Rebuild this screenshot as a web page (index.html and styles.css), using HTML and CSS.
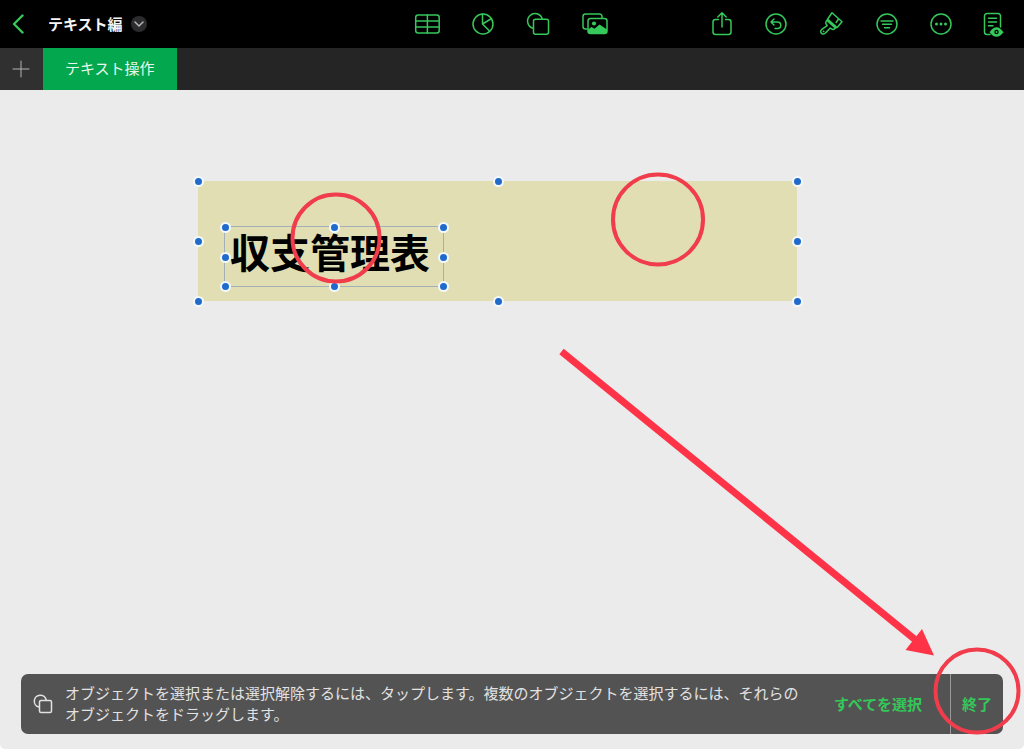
FILE: index.html
```html
<!DOCTYPE html>
<html lang="ja">
<head>
<meta charset="utf-8">
<title>テキスト編</title>
<link rel="stylesheet" href="styles.css">
</head>
<body>
<div class="app">
  <header class="toolbar">
    <div class="toolbar-start">
      <button class="back" aria-label="戻る"><svg width="12" height="20" viewBox="0 0 12 20"><path d="M10.500 1.500L2 10l8.500 8.500" stroke-width="2.400"/></svg></button>
      <h1 class="title">テキスト編</h1>
      <button class="title-menu" aria-label="書類メニュー"><svg width="10" height="6" viewBox="0 0 10 6"><path d="M1 1l4 4 4-4"/></svg></button>
    </div>
    <div class="tools tools-insert">
      <button class="tool" aria-label="表"><svg viewBox="0 0 28 28"><rect x="2.700" y="5" width="23.500" height="18" rx="2.500"/><path d="M14.400 5v18M2.700 11h23.500M2.700 17h23.500"/></svg></button>
      <button class="tool" aria-label="グラフ"><svg viewBox="0 0 28 28"><circle cx="14" cy="14" r="10"/><path d="M13.500 4v10l7 7M13.500 14l9-5.500"/></svg></button>
      <button class="tool" aria-label="図形"><svg viewBox="0 0 28 28"><path d="M8 18.300A7.500 7.500 0 1 1 17.300 9"/><rect x="8.500" y="9.200" width="15" height="15" rx="2"/></svg></button>
      <button class="tool" aria-label="メディア"><svg viewBox="0 0 28 28"><path d="M6 19H4.500A2.500 2.500 0 0 1 2 16.500V6.500A2.500 2.500 0 0 1 4.500 4H18.500A2.500 2.500 0 0 1 21 6.500V8"/><rect x="7" y="8.500" width="19" height="15" rx="2.500"/><circle class="fill" cx="13" cy="13.500" r="2.100"/><path class="fill" d="M7 19.500l3.500-2.500 3 1.800 5-4.300 7.500 5v1.500q0 2.500-2.500 2.500h-14Q7 23.500 7 21z"/></svg></button>
    </div>
    <div class="tools tools-actions">
      <button class="tool" aria-label="共有"><svg viewBox="0 0 28 28"><path d="M9.500 9.500H6.500A2.500 2.500 0 0 0 4 12v10A2.500 2.500 0 0 0 6.500 24.500h13a2.500 2.500 0 0 0 2.500-2.500V12a2.500 2.500 0 0 0-2.500-2.500H16.500M13 17V3M8.800 7L13 2.800 17.200 7"/></svg></button>
      <button class="tool" aria-label="取り消す"><svg viewBox="0 0 28 28"><circle cx="13" cy="14" r="10"/><path d="M11 9l-3 3 3 3M8 12h6.500a3.200 3.200 0 0 1 0 6.500H12"/></svg></button>
      <button class="tool" aria-label="フォーマット"><svg viewBox="0 0 28 28"><path d="M15 2.800L25 11.800l-4.200 5q-1.500 1.800-3.300.3l-6.500-5.700q-1.400-1.300 0-2.900zM10.800 9.200L19 16.600l-1.200 2q-1.500 1.500-3.300.3l-1.300-.9L9 22.600q-2.200 2.500-4.500.8-2-2.400.7-4.300l5-3.500-1-1.400q-1-1.400.1-3zM21.500 9l-2.300 3.500"/><circle class="fill" cx="6.600" cy="21.400" r=".9"/></svg></button>
      <button class="tool" aria-label="整理"><svg viewBox="0 0 28 28"><circle cx="16" cy="14" r="10"/><path d="M10 11h12M11.500 14.300h9M13.500 17.700h5"/></svg></button>
      <button class="tool" aria-label="その他"><svg viewBox="0 0 28 28"><circle cx="16" cy="14" r="10"/><g class="fill"><circle cx="11.500" cy="14" r="1.500"/><circle cx="16" cy="14" r="1.500"/><circle cx="20.500" cy="14" r="1.500"/></g></svg></button>
      <button class="tool" aria-label="表示モード"><svg viewBox="0 0 28 28"><path d="M11 24.500H8A2.500 2.500 0 0 1 5.500 22V6A2.500 2.500 0 0 1 8 3.500h11A2.500 2.500 0 0 1 21.500 6V17M9.500 8.200h8M9.500 12h8M9.500 15.700h4.500"/><path class="fill" d="M10.500 22.300q7-10 14 0-7 9-14 0z"/><circle class="pupil" cx="17.500" cy="22" r="2.200"/><circle class="fill" cx="17.500" cy="22" r=".9"/></svg></button>
    </div>
  </header>

  <nav class="tabs">
    <button class="add-sheet" aria-label="シートを追加"><svg width="18" height="18" viewBox="0 0 18 18"><path d="M9 1v16M1 9h16"/></svg></button>
    <button class="tab">テキスト操作</button>
  </nav>

  <main class="canvas">
    <div class="object shape">
      <i class="handle n w"></i><i class="handle n c"></i><i class="handle n e"></i>
      <i class="handle m w"></i><i class="handle m e"></i>
      <i class="handle s w"></i><i class="handle s c"></i><i class="handle s e"></i>
    </div>
    <div class="object textbox">収支管理表
      <i class="handle n w"></i><i class="handle n c"></i><i class="handle n e"></i>
      <i class="handle m w"></i><i class="handle m e"></i>
      <i class="handle s w"></i><i class="handle s c"></i><i class="handle s e"></i>
    </div>
    <section class="select-bar">
      <svg class="select-icon" width="20" height="20" viewBox="0 0 20 20"><path d="M6 13A6 6 0 1 1 13.200 6"/><rect x="6.500" y="6.500" width="12" height="12" rx="1.500"/></svg>
      <p class="hint">オブジェクトを選択または選択解除するには、タップします。複数のオブジェクトを選択するには、それらのオブジェクトをドラッグします。</p>
      <button class="action select-all">すべてを選択</button>
      <button class="action done">終了</button>
    </section>
  </main>

  <svg class="marks" width="1024" height="749" viewBox="0 0 1024 749" aria-hidden="true">
    <circle cx="336" cy="238" r="43.500"/>
    <circle cx="658" cy="219.500" r="45"/>
    <circle cx="977" cy="691" r="41.500"/>
    <path class="shaft" d="M561.500 351.500L918 642"/>
    <path class="head" d="M934 655.500L922 629 905.500 650z"/>
  </svg>
</div>
</body>
</html>
```
FILE: styles.css
```css
* {
  box-sizing: border-box;
}

body {
  margin: 0;
  background: #fff;
  font-family: "Noto Sans CJK JP", sans-serif;
  font-size: 15px;
}

button {
  margin: 0;
  padding: 0;
  border: 0;
  background: none;
  color: inherit;
  font: inherit;
}

svg {
  display: block;
  fill: none;
  stroke: currentColor;
  stroke-width: 1.5;
  stroke-linecap: round;
  stroke-linejoin: round;
}

.app {
  position: relative;
  display: flex;
  flex-direction: column;
  min-height: 100vh;
  overflow: hidden;
}

.toolbar {
  display: grid;
  grid-template-columns: 1fr auto 1fr;
  align-items: center;
  height: 48px;
  padding: 0 17px 0 12px;
  background: #000;
  color: #35c85a;
}

.toolbar-start {
  display: flex;
  align-items: center;
}

.title {
  margin: 0 8px 0 24px;
  color: #f4f4f4;
  font-size: 15px;
  line-height: 24px;
  white-space: nowrap;
}

.title-menu {
  display: grid;
  place-items: center;
  width: 16px;
  height: 16px;
  border-radius: 50%;
  background: #2c2c2f;
  color: #b5b5b8;
}

.tools {
  display: flex;
}

.tools-insert {
  gap: 28px;
  padding-left: 3px;
}

.tools-actions {
  gap: 26px;
  justify-content: flex-end;
}

.tool,
.tool svg {
  width: 28px;
  height: 28px;
}

.fill {
  fill: currentColor;
  stroke: none;
}

.pupil {
  fill: #000;
  stroke: none;
}

.tabs {
  display: flex;
  height: 42px;
  background: #252525;
}

.add-sheet {
  display: grid;
  place-items: center;
  width: 43px;
  padding-right: 2px;
  background: #303030;
  color: #b4b4b4;
  stroke-width: 1;
}

.add-sheet svg {
  stroke-width: 1;
}

.tab {
  padding: 0 22px 3px;
  background: #03a84e;
  color: #e6f7ec;
}

.canvas {
  position: relative;
  display: flex;
  flex: 1;
  flex-direction: column;
  justify-content: flex-end;
  padding: 0 21px 15px;
  border-radius: 0 0 5px 5px;
  background: #ebebeb;
}

.object {
  position: absolute;
}

.shape {
  top: 91px;
  left: 198px;
  width: 599px;
  height: 120px;
  background: #e1deb4;
}

.textbox {
  top: 136px;
  left: 224px;
  width: 220px;
  height: 61px;
  padding-left: 5px;
  border: 1px solid #a3b0b8;
  color: #000;
  font-size: 40px;
  font-weight: 700;
  line-height: 48px;
  white-space: nowrap;
}

.handle {
  position: absolute;
  width: 11px;
  height: 11px;
  margin: -5px;
  border: 2px solid #f3f8fc;
  border-radius: 50%;
  background: #1f6acb;
}

.n { top: 0; }
.m { top: 50%; }
.s { top: 100%; }
.w { left: 0; }
.c { left: 50%; }
.e { left: 100%; }

.select-bar {
  display: flex;
  align-items: center;
  min-height: 60px;
  border-radius: 7px;
  background: #535353;
  color: #e2e2e2;
}

.select-icon {
  flex: none;
  margin: 0 12px;
}

.hint {
  flex: 1;
  margin: 0;
  padding-bottom: 2px;
  line-height: 21px;
}

.action {
  align-self: stretch;
  padding: 0 11px 2px;
  color: #34c759;
  font-weight: 700;
  white-space: nowrap;
}

.select-all {
  padding-right: 28px;
  padding-left: 28px;
}

.done {
  border-left: 1px solid #999;
}

.marks {
  position: absolute;
  top: 0;
  left: 0;
  color: #f03c4b;
  stroke-width: 4;
  pointer-events: none;
}

.shaft {
  stroke: #ff3347;
  stroke-width: 7;
  stroke-linecap: butt;
}

.head {
  fill: #ff3347;
  stroke: none;
}
```
